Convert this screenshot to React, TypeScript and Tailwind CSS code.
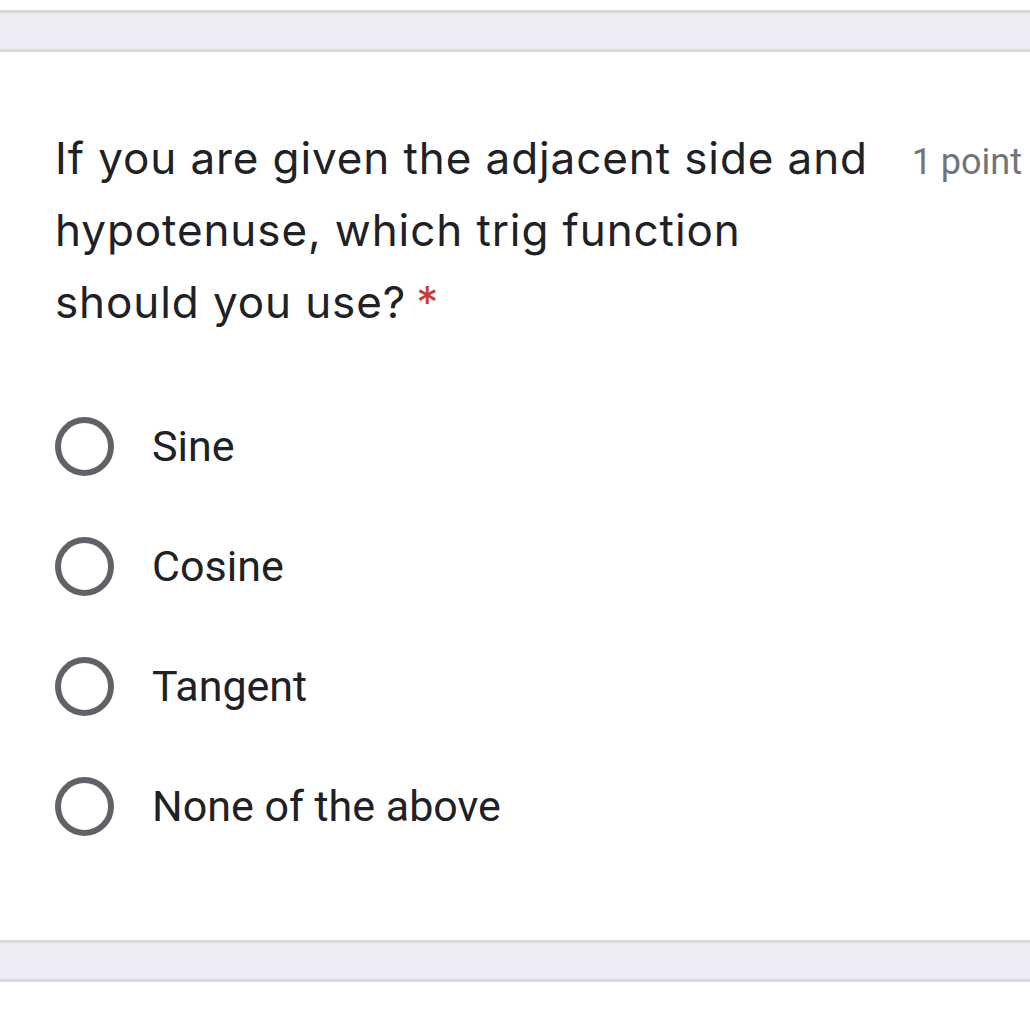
import React from "react";

const options = ["Sine", "Cosine", "Tangent", "None of the above"];

export default function App() {
  return (
    <div className="w-[1030px] h-[1031px] bg-white overflow-hidden" style={{ fontFamily: "Roboto, sans-serif" }}>
      <div className="h-[10px] bg-white" />
      <div className="h-[42px] bg-[#eeebf6] border-y-[3px] border-[#dadadd]" />
      <div className="bg-white pl-[55px] pt-[70px] pb-[74px]">
        <div className="flex items-start justify-between">
          <div className="text-[44px] leading-[72px] text-[#202124] tracking-[0.9px]" style={{ fontFamily: "Inter, sans-serif" }}>
            If you are given the adjacent side and
            <br />
            hypotenuse, which trig function
            <br />
            should you use?<span className="ml-[10px] text-[#d03a2e]">*</span>
          </div>
          <div className="text-[36px] leading-[72px] text-[#70757a] whitespace-nowrap pr-[8px] pt-[4px]">1 point</div>
        </div>
        <div className="mt-[48px] flex flex-col">
          {options.map((o) => (
            <div key={o} className="h-[120px] flex items-center">
              <div className="w-[59px] h-[59px] rounded-full border-[6px] border-[#5f6368] shrink-0" />
              <div className="ml-[38px] text-[43px] text-[#202124]">{o}</div>
            </div>
          ))}
        </div>
      </div>
      <div className="h-[42px] bg-[#eeebf6] border-y-[3px] border-[#dadadd]" />
      <div className="h-[49px] bg-white" />
    </div>
  );
}
